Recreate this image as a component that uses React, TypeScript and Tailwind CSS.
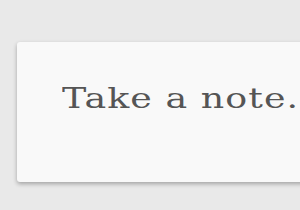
export default function App() {
  return (
    <div className="h-[210px] w-[300px] overflow-hidden bg-[#e9e9e9] pt-[42px] pl-[17px]">
      <div className="flex h-[140px] w-[400px] items-start rounded-[3px] bg-[#f9f9f9] pl-[45px] pt-[37px] shadow-[0_2px_4px_rgba(0,0,0,0.3)]">
        <span className="inline-block origin-left scale-x-[1.3] whitespace-nowrap text-[28px] leading-[40px] tracking-[0.8px] text-[#555555] [font-family:'DejaVu_Serif',serif]">
          Take a note...
        </span>
      </div>
    </div>
  );
}
